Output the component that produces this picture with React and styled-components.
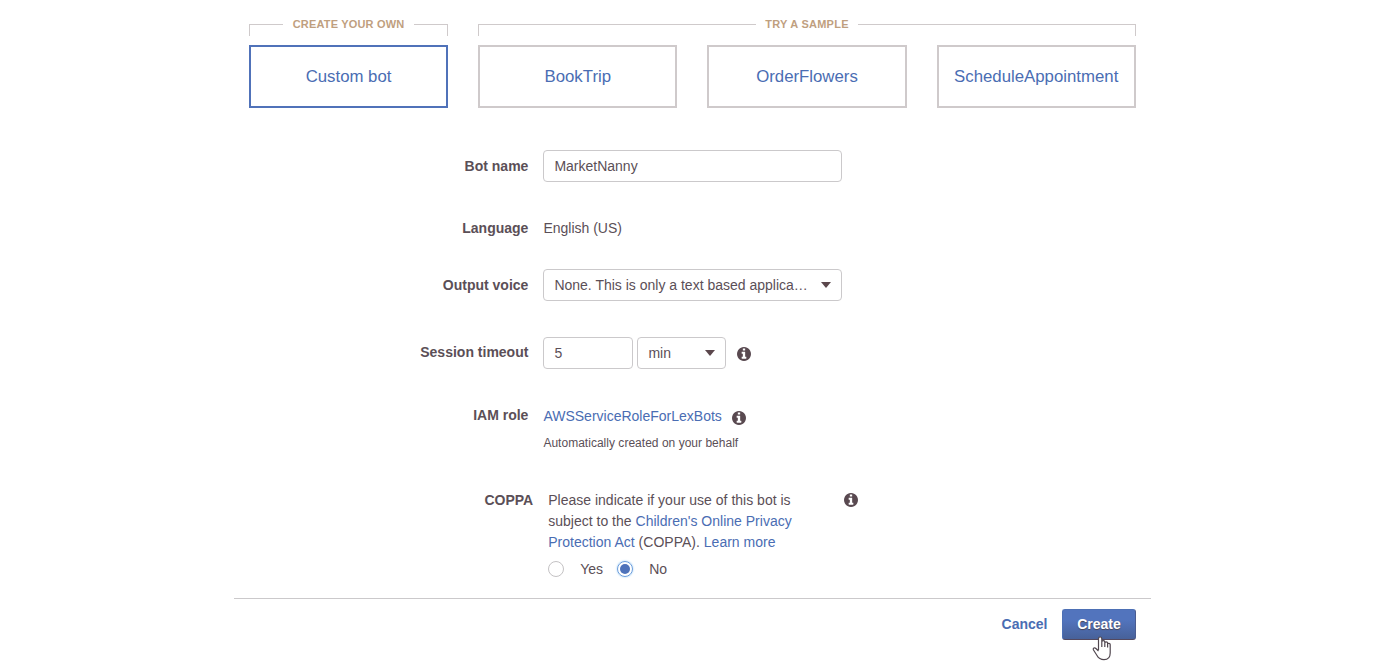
import React from "react";
import styled, { createGlobalStyle, css } from "styled-components";

const GlobalStyle = createGlobalStyle`
  * { box-sizing: border-box; }
  body {
    margin: 0;
    background: #fff;
    color: #5b4f57;
    font: 14px/21px "Liberation Sans", Arial, sans-serif;
  }
`;

const Page = styled.main`
  width: 917px;
  height: 667px;
  margin-left: 234px;
  overflow: hidden;
`;

const Templates = styled.section`
  display: grid;
  grid-template-columns: repeat(4, 199.23px);
  column-gap: 30px;
  padding: 12px 15px 0 14.95px;
`;

const Bracket = styled.div`
  grid-column: span ${(p) => p.$span};
  display: flex;
  height: 33px;
  padding-top: 12px;
`;

const BracketArm = styled.div`
  flex: 1;
  height: 12px;
  border-top: 1px solid #cfcacb;
  ${(p) =>
    p.$end
      ? css`border-right: 1px solid #cfcacb;`
      : css`border-left: 1px solid #cfcacb;`}
`;

const BracketLabel = styled.span`
  margin: -12px 9.6px 0;
  line-height: 24px;
  font-size: 11px;
  font-weight: bold;
  letter-spacing: ${(p) => p.$spacing}px;
  color: #bf9f7f;
  white-space: nowrap;
`;

const TemplateCard = styled.button`
  height: 63px;
  padding: 0;
  border: 2px solid ${(p) => (p.$selected ? "#5072b9" : "#cfcacb")};
  background: #fff;
  color: #4a6db3;
  font: 16.8px "Liberation Sans", Arial, sans-serif;
`;

const Form = styled.form`
  padding-top: 42px;
`;

const Row = styled.div`
  display: flex;
  align-items: flex-start;
  height: ${(p) => p.$height}px;
`;

const Label = styled.label`
  flex: none;
  width: ${(p) => p.$width || 294.4}px;
  margin-right: 15px;
  padding-top: ${(p) => p.$top || 0}px;
  text-align: right;
  font-weight: bold;
`;

const Field = styled.div`
  display: flex;
  align-items: center;
  width: ${(p) => p.$width}px;
  height: 32px;
  margin-right: 4px;
  padding: 0 10px;
  border: 1px solid #cbc9cb;
  border-radius: 4px;
`;

const FieldText = styled.span`
  flex: 1;
  white-space: nowrap;
`;

const Caret = styled.i`
  margin-left: 8px;
  border: 5.5px solid transparent;
  border-top: 6px solid #5b474c;
  border-bottom: 0;
`;

const Value = styled.div`
  padding-top: ${(p) => p.$top || 0}px;
`;

const Link = styled.a`
  color: #4a6db3;
`;

const InfoIcon = styled.svg`
  flex: none;
  width: 14px;
  height: 14px;
  margin: ${(p) => p.$margin};
  fill: #594950;
`;

const Hint = styled.div`
  margin-top: 6px;
  font-size: 12px;
  line-height: 20px;
  letter-spacing: 0.02px;
`;

const RoleLine = styled.div`
  display: flex;
  height: 21px;
`;

const Notice = styled.div`
  width: 295px;
  letter-spacing: 0.01px;
`;

const Choices = styled.div`
  display: flex;
  align-items: flex-start;
  height: 21px;
  margin-top: 6px;
`;

const Radio = styled.span`
  display: grid;
  place-items: center;
  width: 16px;
  height: 16px;
  margin-top: 2px;
  border: 1px solid ${(p) => (p.$checked ? "#6a9cdc" : "#c4c2c4")};
  border-radius: 50%;
  box-shadow: ${(p) => (p.$checked ? "0 0 2px #8fc8f4" : "none")};
  &::after {
    content: "";
    width: 10px;
    height: 10px;
    border-radius: 50%;
    background: ${(p) => (p.$checked ? "#4e72ba" : "transparent")};
  }
`;

const ChoiceText = styled.span`
  width: 37px;
  padding-left: 16px;
  margin-right: ${(p) => p.$gap || 0}px;
`;

const Footer = styled.footer`
  display: flex;
  justify-content: flex-end;
  align-items: flex-start;
  padding: 10px 15px 0 0;
  border-top: 1px solid #cbc9cb;
`;

const Cancel = styled.a`
  margin-right: 14.5px;
  line-height: 31px;
  font-weight: bold;
  color: #4a6db3;
`;

const Create = styled.button`
  position: relative;
  width: 74px;
  height: 31px;
  padding: 0 0 2px;
  border: 1px solid;
  border-color: #4d70b5 #4b5c90 #54495f #4d70b5;
  border-radius: 3px;
  background: linear-gradient(#5274bd 35%, #476199);
  color: #fff;
  font: bold 14px "Liberation Sans", Arial, sans-serif;
  text-shadow: 0 1px 1px #4a4452;
`;

const Pointer = styled.svg`
  position: absolute;
  left: 29px;
  top: 26px;
  width: 20px;
  height: 25px;
`;

function Info({ margin }) {
  return (
    <InfoIcon viewBox="128 128 1536 1536" $margin={margin}>
      <path d="M1152 1376v-160q0-14-9-23t-23-9h-96v-512q0-14-9-23t-23-9h-320q-14 0-23 9t-9 23v160q0 14 9 23t23 9h96v320h-96q-14 0-23 9t-9 23v160q0 14 9 23t23 9h448q14 0 23-9t9-23zm-128-896v-160q0-14-9-23t-23-9h-192q-14 0-23 9t-9 23v160q0 14 9 23t23 9h192q14 0 23-9t9-23zm640 416q0 209-103 385.500t-279.500 279.500-385.500 103-385.500-103-279.500-279.500-103-385.500 103-385.500 279.500-279.500 385.500-103 385.500 103 279.500 279.500 103 385.500z" />
    </InfoIcon>
  );
}

function Select({ width, children }) {
  return (
    <Field $width={width}>
      <FieldText>{children}</FieldText>
      <Caret />
    </Field>
  );
}

function TemplateGroup({ span, spacing, children }) {
  return (
    <Bracket $span={span}>
      <BracketArm />
      <BracketLabel $spacing={spacing}>{children}</BracketLabel>
      <BracketArm $end />
    </Bracket>
  );
}

export default function App() {
  return (
    <Page>
      <GlobalStyle />
      <Templates>
        <TemplateGroup span={1} spacing={0.18}>CREATE YOUR OWN</TemplateGroup>
        <TemplateGroup span={3} spacing={0.25}>TRY A SAMPLE</TemplateGroup>
        <TemplateCard $selected>Custom bot</TemplateCard>
        <TemplateCard>BookTrip</TemplateCard>
        <TemplateCard>OrderFlowers</TemplateCard>
        <TemplateCard>ScheduleAppointment</TemplateCard>
      </Templates>
      <Form>
        <Row $height={68}>
          <Label $top={6}>Bot name</Label>
          <Field $width={299}>MarketNanny</Field>
        </Row>
        <Row $height={51}>
          <Label>Language</Label>
          <Value>English (US)</Value>
        </Row>
        <Row $height={68}>
          <Label $top={6}>Output voice</Label>
          <Select width={299}>None. This is only a text based applica…</Select>
        </Row>
        <Row $height={68}>
          <Label $top={5}>Session timeout</Label>
          <Field $width={90}>5</Field>
          <Select width={89}>min</Select>
          <Info margin="10px 0 0 7px" />
        </Row>
        <Row $height={85}>
          <Label>IAM role</Label>
          <Value $top={1}>
            <RoleLine>
              <Link>AWSServiceRoleForLexBots</Link>
              <Info margin="5px 0 0 10px" />
            </RoleLine>
            <Hint>Automatically created on your behalf</Hint>
          </Value>
        </Row>
        <Row $height={108}>
          <Label $width={299.2}>COPPA</Label>
          <Notice>
            Please indicate if your use of this bot is<br />
            subject to the <Link>Children's Online Privacy<br />
            Protection Act</Link> (COPPA). <Link>Learn more</Link>
            <Choices>
              <Radio />
              <ChoiceText $gap={16}>Yes</ChoiceText>
              <Radio $checked />
              <ChoiceText>No</ChoiceText>
            </Choices>
          </Notice>
          <Info margin="3px 0 0 1px" />
        </Row>
      </Form>
      <Footer>
        <Cancel>Cancel</Cancel>
        <Create type="button">
          Create
          <Pointer viewBox="0 0 20 25">
            <path
              d="M6.500 14V2.800c0-2.400 3.300-2.400 3.300 0V9M9.800 11V6c0-1.800 3-1.800 3 0v5M12.800 7c0-1.500 2.800-1.500 2.800 0v4.500M15.600 8.300c0-1.300 2.600-1.300 2.600.2V17c0 4-2.300 6.600-6.200 6.600-3.600 0-5.500-1.300-7-4.100L1.500 14c-1-2 1.200-2.700 2.400-1.500L6.500 15"
              fill="#fff"
              stroke="#51474f"
              strokeWidth="1.2"
              strokeLinejoin="round"
            />
          </Pointer>
        </Create>
      </Footer>
    </Page>
  );
}
